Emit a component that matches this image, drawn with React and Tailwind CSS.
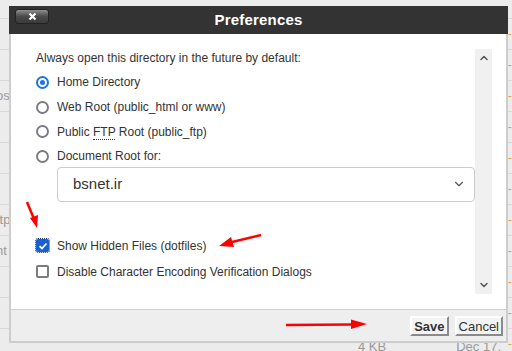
import { ChevronDown, ChevronUp } from "lucide-react";

const rows = [
  { left: "", right: "" },
  { left: "", right: "" },
  { left: "os", right: "" },
  { left: "", right: "" },
  { left: "", right: "" },
  { left: "", right: "" },
  { left: "ftp", right: "" },
  { left: "nt", right: "" },
  { left: "", right: "" },
  { left: "", right: "" },
  { left: "", right: "" },
];

function Radio({ checked, children }) {
  return (
    <label className="flex items-center gap-[8px] h-[24.7px]">
      <span
        className={
          checked
            ? "w-[13px] h-[13px] rounded-full border-[2px] border-[#1a73e8] flex items-center justify-center"
            : "w-[13px] h-[13px] rounded-full border-[2px] border-[#7b7b85]"
        }
      >
        {checked && <span className="w-[5px] h-[5px] rounded-full bg-[#1a73e8]" />}
      </span>
      <span>{children}</span>
    </label>
  );
}

function Check({ checked, children }) {
  return (
    <label className="flex items-center gap-[8px] h-[26px]">
      {checked ? (
        <span className="w-[13px] h-[13px] rounded-[2px] bg-[#1a5fd0] outline-1 outline-dotted outline-[#1a3a80] flex items-center justify-center">
          <svg width="10" height="10" viewBox="0 0 10 10">
            <path d="M1.5 5.2 L4 7.5 L8.5 2.5" stroke="#fff" strokeWidth="1.8" fill="none" />
          </svg>
        </span>
      ) : (
        <span className="w-[13px] h-[13px] rounded-[2px] border-[2px] border-[#7b7b85]" />
      )}
      <span>{children}</span>
    </label>
  );
}

export default function App() {
  return (
    <div
      className="relative w-[512px] h-[351px] overflow-hidden bg-[#ececec] text-[#999]"
      style={{ fontFamily: '"Liberation Sans", Arial, sans-serif' }}
    >
      {/* page behind the dialog */}
      <div className="pt-[18px]">
        {rows.map((r, i) => (
          <div key={i} className="h-[31px] border-t border-[#d9d9d9] flex items-center justify-between text-[13px]">
            <span className="-ml-[4px]">{r.left}</span>
            <span className="text-[#d9a860]">-</span>
          </div>
        ))}
      </div>
      <div className="absolute left-0 bottom-[-5px] w-full flex text-[13px] text-[#999]">
        <span className="ml-[358px]">4 KB</span>
        <span className="ml-[70px]">Dec 17,</span>
      </div>

      {/* dialog */}
      <div className="absolute left-[9px] top-[6px] w-[499px] h-[337px] bg-[#cdcdcd] px-[2px] pb-[2px] flex flex-col">
        <div className="h-[28px] -mx-[2px] bg-[#333] flex items-center relative">
          <button className="absolute left-[6px] top-[3px] w-[34px] h-[15px] rounded-[3px] border border-[#222] bg-gradient-to-b from-[#8e8e8e] via-[#4a4a4a] to-[#3a3a3a] flex items-center justify-center">
            <svg width="9" height="9" viewBox="0 0 9 9">
              <path d="M1.5 1.5 L7.5 7.5 M7.5 1.5 L1.5 7.5" stroke="#fff" strokeWidth="2.2" />
            </svg>
          </button>
          <div className="flex-1 text-center text-white font-bold text-[15px] tracking-[0.2px]">
            Preferences
          </div>
        </div>

        <div className="flex-1 bg-white pt-[15px] pr-[14px] pb-[15px] flex min-h-0">
          <div className="flex-1 pl-[25px] text-[12px] text-[#333]">
            <div className="h-[17px] flex items-center">
              Always open this directory in the future by default:
            </div>
            <div className="mt-[4px]">
              <Radio checked>Home Directory</Radio>
              <Radio>Web Root (public_html or www)</Radio>
              <Radio>
                Public <span className="border-b border-dotted border-[#333] leading-[11px]">FTP</span> Root (public_ftp)
              </Radio>
              <Radio>Document Root for:</Radio>
            </div>
            <div className="ml-[21px] mt-[-2px] h-[35px] border border-[#ccc] rounded-[4px] flex items-center justify-between pl-[15px] pr-[8px] text-[15px]">
              <span>bsnet.ir</span>
              <ChevronDown size={14} strokeWidth={2} className="text-[#555]" />
            </div>
            <div className="mt-[31px]">
              <Check checked>Show Hidden Files (dotfiles)</Check>
              <Check>Disable Character Encoding Verification Dialogs</Check>
            </div>
          </div>
          <div className="w-[17px] bg-[#f0f0f0] flex flex-col items-center justify-between py-[3px]">
            <ChevronUp size={12} strokeWidth={3} className="text-[#555]" />
            <ChevronDown size={12} strokeWidth={3} className="text-[#555]" />
          </div>
        </div>

        <div className="h-[32px] border-t border-[#cfcfcf] bg-[#eee] flex items-center justify-end gap-[6px] pr-[3px] pt-[1px]">
          <button className="h-[20px] px-[2px] bg-[#f3f3f3] border-[2px] border-t-[#fff] border-l-[#fff] border-b-[#8a8a8a] border-r-[#8a8a8a] text-[13px] font-bold text-[#333] leading-none">
            Save
          </button>
          <button className="h-[20px] px-[2px] bg-[#f3f3f3] border-[2px] border-t-[#fff] border-l-[#fff] border-b-[#8a8a8a] border-r-[#8a8a8a] text-[13px] text-[#333] leading-none">
            Cancel
          </button>
        </div>
      </div>

      {/* red annotation arrows */}
      <svg className="absolute inset-0 pointer-events-none" width="512" height="351">
        <line x1="27" y1="202" x2="34" y2="219" stroke="#f00" strokeWidth="2.5" />
        <polygon points="37,228 30,218 38,215" fill="#f00" />
        <line x1="261" y1="235" x2="232" y2="242" stroke="#f00" strokeWidth="2.5" />
        <polygon points="219,246 231,237 234,247" fill="#f00" />
        <line x1="286" y1="325" x2="352" y2="324.5" stroke="#f00" strokeWidth="2.5" />
        <polygon points="367,324 351,319.5 351,329" fill="#f00" />
      </svg>
    </div>
  );
}
